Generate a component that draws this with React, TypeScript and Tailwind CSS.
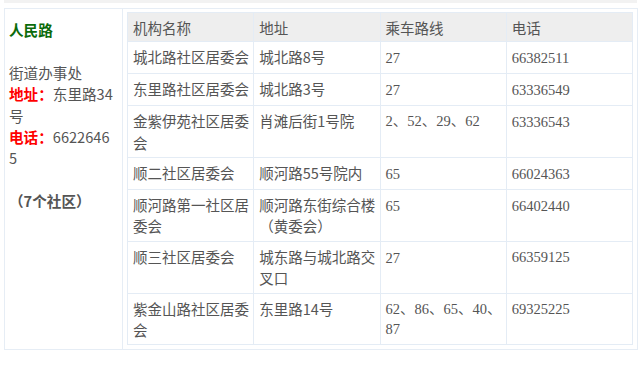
const rows = [
  { name: '城北路社区居委会', addr: '城北路8号', bus: '27', tel: '66382511' },
  { name: '东里路社区居委会', addr: '城北路3号', bus: '27', tel: '63336549' },
  { name: '金紫伊苑社区居委会', addr: '肖滩后街1号院', bus: '2、52、29、62', tel: '63336543' },
  { name: '顺二社区居委会', addr: '顺河路55号院内', bus: '65', tel: '66024363' },
  { name: '顺河路第一社区居委会', addr: '顺河路东街综合楼（黄委会）', bus: '65', tel: '66402440' },
  { name: '顺三社区居委会', addr: '城东路与城北路交叉口', bus: '27', tel: '66359125' },
  { name: '紫金山路社区居委会', addr: '东里路14号', bus: '62、86、65、40、87', tel: '69325225' },
];

const cell = 'border border-[#e4ecf5] pl-[5px] pr-[3px] pb-[4.25px] align-top';
const head = 'border border-[#e4ecf5] pl-[5px] pr-[3px] pt-[4px] pb-[3px] font-normal text-left';
const cjk = '"Noto Sans CJK SC", sans-serif';
const serif = '"Liberation Serif", "Noto Sans CJK SC", serif';

export default function App() {
  return (
    <div lang="zh-CN" className="w-[640px] h-[365px] bg-white overflow-hidden">
      <div className="ml-[4px] mr-[3px] h-[3px] bg-[#f2f2f2]" />
      <div className="ml-[4px] mt-[5px] w-[634px] flex border border-[#e6edf5]">
        <div
          className="w-[118px] shrink-0 border-r border-[#e6edf5] pl-[4px] pr-[7px] pt-[10px] text-[14.6px] leading-[21.4px] text-[#555]"
          style={{ fontFamily: cjk }}
        >
          <div className="font-bold text-[#0a6b0a]">人民路</div>
          <div className="h-[21.4px]" />
          <div>街道办事处</div>
          <div className="break-all">
            <span className="font-bold text-[#ff0000]">地址：</span>东里路34号
          </div>
          <div className="break-all">
            <span className="font-bold text-[#ff0000]">电话：</span>66226465
          </div>
          <div className="h-[21.4px]" />
          <div className="font-bold">（7个社区）</div>
        </div>
        <div className="flex-1 px-[4px] pt-[3px] pb-[4px]">
          <table
            className="w-full table-fixed border-collapse text-[14.5px] leading-[21.25px] text-[#555]"
            style={{ fontFamily: cjk }}
          >
            <thead>
              <tr className="bg-[#eeeeee]">
                <th className={head}>机构名称</th>
                <th className={head}>地址</th>
                <th className={head}>乘车路线</th>
                <th className={head}>电话</th>
              </tr>
            </thead>
            <tbody>
              {rows.map((r) => (
                <tr key={r.tel}>
                  <td className={`${cell} pt-[4px] break-all`}>{r.name}</td>
                  <td className={`${cell} pt-[4px] break-all`}>{r.addr}</td>
                  <td
                    className={`${cell} leading-[20px] ${r.bus.includes('、') ? 'pt-[5px]' : 'pt-[6px]'}`}
                    style={{ fontFamily: serif }}
                  >
                    {r.bus}
                  </td>
                  <td className={`${cell} pt-[5.5px]`} style={{ fontFamily: serif }}>
                    {r.tel}
                  </td>
                </tr>
              ))}
            </tbody>
          </table>
        </div>
      </div>
    </div>
  );
}
